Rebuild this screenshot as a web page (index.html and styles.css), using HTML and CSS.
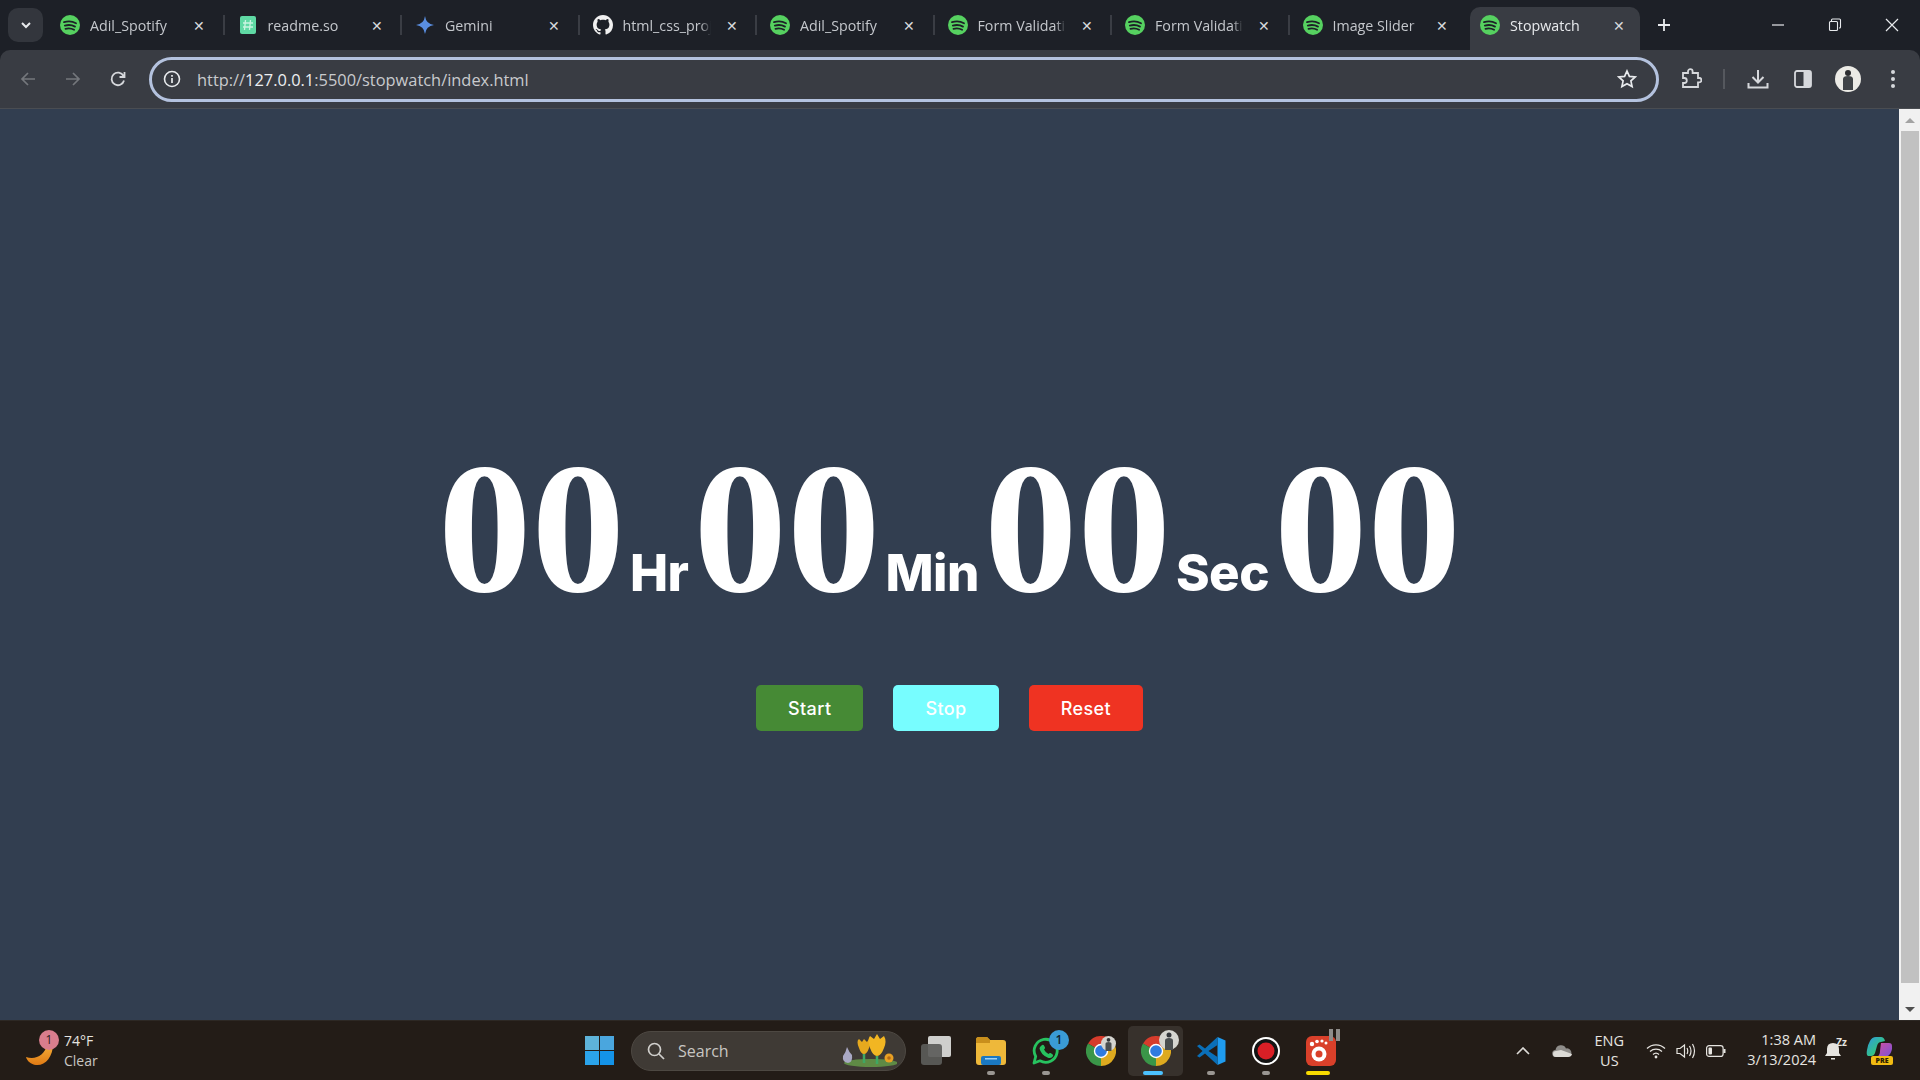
FILE: index.html
```html
<!DOCTYPE html>
<html lang="en">
<head>
  <meta charset="UTF-8">
  <title>Stopwatch</title>
  <link rel="stylesheet" href="styles.css">
</head>
<body>

  <svg class="defs" width="0" height="0">
    <symbol id="spotify" viewBox="0 0 20 20">
      <circle cx="10" cy="10" r="10" fill="#56d160"/>
      <path d="M4 7.2c4-1.2 8.500-.9 12 1M4.800 10.600c3.500-1 7.200-.7 10.200 1M5.500 13.800c3-.7 6-.5 8.600 1" fill="none" stroke="#1d2027" stroke-width="1.800" stroke-linecap="round"/>
    </symbol>
    <symbol id="chrome" viewBox="0 0 30 30">
      <path d="M15 15 2 7.500A15 15 0 0 1 28 7.500Z" fill="#d63c2c"/>
      <path d="M15 15 28 7.500A15 15 0 0 1 15 30Z" fill="#deaa1f"/>
      <path d="M15 15V30A15 15 0 0 1 2 7.500Z" fill="#3a9648"/>
      <circle cx="15" cy="15" r="7.200" fill="#fff"/>
      <circle cx="15" cy="15" r="5.800" fill="#2f7be0"/>
    </symbol>
    <symbol id="person" viewBox="0 0 20 20">
      <circle cx="10" cy="10" r="10" fill="#d5d5d0"/>
      <circle cx="10" cy="5" r="2.500" fill="#33363a"/>
      <path d="M6 20V10.500Q6 8 10 8T14 10.500V20Z" fill="#4a4e50"/>
    </symbol>
  </svg>

  <div class="browser">

    <div class="tabstrip">
      <button class="tab-menu">
        <svg width="12" height="12" viewBox="0 0 12 12"><path d="M2 4l4 4 4-4" fill="none" stroke="#e8eaed" stroke-width="2"/></svg>
      </button>

      <div class="tab">
        <svg class="favicon"><use href="#spotify"/></svg>
        <span class="tab-title">Adil_Spotify</span>
        <span class="tab-close">✕</span>
      </div>
      <div class="tab">
        <svg class="favicon" viewBox="0 0 20 20">
          <rect x="2" y="1" width="16" height="18" rx="2" fill="#5fd9a4"/>
          <path d="M7.500 5 6.500 15M12.500 5l-1 10M5 8h10M5 12h10" stroke="#c9f5e1" stroke-width="1.300"/>
        </svg>
        <span class="tab-title">readme.so</span>
        <span class="tab-close">✕</span>
      </div>
      <div class="tab">
        <svg class="favicon" viewBox="0 0 20 20"><path d="M10 1Q11 9 19 10 11 11 10 19 9 11 1 10 9 9 10 1Z" fill="#5a8ee0"/></svg>
        <span class="tab-title">Gemini</span>
        <span class="tab-close">✕</span>
      </div>
      <div class="tab">
        <svg class="favicon" viewBox="0 0 16 16"><path fill="#f0f0f0" d="M8 0C3.580 0 0 3.580 0 8c0 3.540 2.290 6.530 5.470 7.590.4.070.55-.17.55-.38 0-.19-.01-.82-.01-1.490-2.010.37-2.530-.49-2.690-.94-.09-.23-.48-.94-.82-1.130-.28-.15-.68-.52-.01-.53.63-.01 1.080.58 1.230.82.720 1.210 1.870.870 2.330.660.070-.520.280-.870.510-1.070-1.780-.2-3.640-.890-3.640-3.950 0-.870.310-1.590.820-2.150-.080-.2-.360-1.020.080-2.120 0 0 .670-.210 2.200.820.640-.180 1.320-.270 2-.270s1.360.090 2 .270c1.530-1.040 2.200-.820 2.200-.820.440 1.100.160 1.920.080 2.120.510.560.820 1.270.820 2.150 0 3.070-1.870 3.750-3.650 3.950.290.250.540.730.540 1.480 0 1.070-.010 1.930-.010 2.200 0 .210.150.460.550.380A8.010 8.010 0 0 0 16 8c0-4.420-3.580-8-8-8z"/></svg>
        <span class="tab-title">html_css_proj</span>
        <span class="tab-close">✕</span>
      </div>
      <div class="tab">
        <svg class="favicon"><use href="#spotify"/></svg>
        <span class="tab-title">Adil_Spotify</span>
        <span class="tab-close">✕</span>
      </div>
      <div class="tab">
        <svg class="favicon"><use href="#spotify"/></svg>
        <span class="tab-title">Form Validati</span>
        <span class="tab-close">✕</span>
      </div>
      <div class="tab">
        <svg class="favicon"><use href="#spotify"/></svg>
        <span class="tab-title">Form Validati</span>
        <span class="tab-close">✕</span>
      </div>
      <div class="tab before-active">
        <svg class="favicon"><use href="#spotify"/></svg>
        <span class="tab-title">Image Slider</span>
        <span class="tab-close">✕</span>
      </div>
      <div class="tab active">
        <svg class="favicon"><use href="#spotify"/></svg>
        <span class="tab-title">Stopwatch</span>
        <span class="tab-close">✕</span>
      </div>

      <svg class="new-tab" width="14" height="14" viewBox="0 0 14 14"><path d="M7 1v12M1 7h12" stroke="#e8eaed" stroke-width="1.800"/></svg>

      <div class="window-controls">
        <div class="window-btn"><svg width="14" height="14" viewBox="0 0 14 14"><path d="M1 7h12" stroke="#e8eaed" stroke-width="1.200"/></svg></div>
        <div class="window-btn"><svg width="14" height="14" viewBox="0 0 14 14"><path d="M3.500 3V2q0-1 1-1h7q1 0 1 1v7q0 1-1 1H11M1.500 4.500q0-1 1-1h6q1 0 1 1v7q0 1-1 1h-6q-1 0-1-1Z" fill="none" stroke="#e8eaed" stroke-width="1.100"/></svg></div>
        <div class="window-btn"><svg width="14" height="14" viewBox="0 0 14 14"><path d="M1 1l12 12M13 1 1 13" stroke="#e8eaed" stroke-width="1.200"/></svg></div>
      </div>
    </div>

    <div class="toolbar">
      <div class="nav-btn"><svg width="16" height="16" viewBox="0 0 16 16"><path d="M15 8H2M8 2 2 8l6 6" fill="none" stroke="#74777c" stroke-width="1.700"/></svg></div>
      <div class="nav-btn"><svg width="16" height="16" viewBox="0 0 16 16"><path d="M1 8h13M8 2l6 6-6 6" fill="none" stroke="#74777c" stroke-width="1.700"/></svg></div>
      <div class="nav-btn"><svg width="16" height="16" viewBox="0 0 16 16"><path d="M13.500 5A6.300 6.300 0 1 0 14 9.500M14.500 1v5h-5" fill="none" stroke="#d6d8dc" stroke-width="1.800"/></svg></div>

      <div class="omnibox">
        <svg width="18" height="18" viewBox="0 0 18 18"><circle cx="9" cy="9" r="7.500" fill="none" stroke="#e8eaed" stroke-width="1.600"/><path d="M9 8v5M9 5v1.800" stroke="#e8eaed" stroke-width="1.700"/></svg>
        <span class="url">http://<b>127.0.0.1</b>:5500/stopwatch/index.html</span>
        <svg class="star" width="20" height="20" viewBox="0 0 20 20"><path d="M10 2l2.400 5.400 5.800.6-4.300 3.900 1.200 5.700L10 14.700l-5.100 2.900 1.200-5.700L1.800 8l5.800-.6Z" fill="none" stroke="#e8eaed" stroke-width="1.700"/></svg>
      </div>

      <div class="toolbar-actions">
        <div class="nav-btn"><svg width="22" height="22" viewBox="0 0 22 22"><path d="M3 5h5V3.500a2.300 2.300 0 0 1 4.600 0V5H18v5h1.200a2.200 2.200 0 0 1 0 4.400H18V19H3v-4h1.300a2.500 2.500 0 0 0 0-5H3Z" fill="none" stroke="#d6d8dc" stroke-width="1.800"/></svg></div>
        <span class="toolbar-sep"></span>
        <div class="nav-btn"><svg width="22" height="22" viewBox="0 0 22 22"><path d="M11 2v12M5.500 9l5.500 5.500L16.500 9M1.500 15v4.500h19V15" fill="none" stroke="#d6d8dc" stroke-width="2"/></svg></div>
        <div class="nav-btn"><svg width="20" height="20" viewBox="0 0 20 20"><rect x="2" y="2" width="16" height="16" rx="2" fill="none" stroke="#d6d8dc" stroke-width="1.800"/><rect x="10.500" y="2" width="7.500" height="16" fill="#d6d8dc"/></svg></div>
        <div class="nav-btn"><svg width="26" height="26" viewBox="0 0 26 26"><circle cx="13" cy="13" r="13" fill="#ecebe6"/><circle cx="13" cy="7" r="3" fill="#2c2d30"/><path d="M8 24V13q0-3 5-3t5 3v11Z" fill="#404347"/></svg></div>
        <div class="nav-btn"><svg width="6" height="20" viewBox="0 0 6 20"><circle cx="3" cy="3" r="2" fill="#d6d8dc"/><circle cx="3" cy="10" r="2" fill="#d6d8dc"/><circle cx="3" cy="17" r="2" fill="#d6d8dc"/></svg></div>
      </div>
    </div>

    <div class="viewport">
      <main class="page">
        <div class="clock">
          <span class="digits">00</span>
          <span class="unit">Hr</span>
          <span class="digits">00</span>
          <span class="unit">Min</span>
          <span class="digits">00</span>
          <span class="unit">Sec</span>
          <span class="digits">00</span>
        </div>
        <div class="buttons">
          <button class="btn btn-start">Start</button>
          <button class="btn btn-stop">Stop</button>
          <button class="btn btn-reset">Reset</button>
        </div>
      </main>

      <div class="scrollbar">
        <div class="arrow-box"><span class="arrow-up"></span></div>
        <div class="thumb"></div>
        <div class="arrow-box"><span class="arrow-down"></span></div>
      </div>
    </div>

    <div class="taskbar">
      <div class="weather">
        <svg width="28" height="22" viewBox="0 0 28 22">
          <defs><linearGradient id="moon" x1="0" y1="0" x2="0" y2="1"><stop offset="0" stop-color="#f5b13a"/><stop offset="1" stop-color="#e07a14"/></linearGradient></defs>
          <path d="M27 0C27 13 19 22 10 21 5 20.500 1 17 0 13 9 16 19 12 21 0Z" fill="url(#moon)"/>
        </svg>
        <span class="weather-badge">1</span>
        <div class="weather-text">
          <span>74°F</span>
          <span>Clear</span>
        </div>
      </div>

      <div class="task-apps">
        <div class="task-item">
          <svg width="29" height="29" viewBox="0 0 29 29">
            <rect width="14" height="14" fill="#5eb3d9"/><rect x="15" width="14" height="14" fill="#4aa6de"/>
            <rect y="15" width="14" height="14" fill="#2ba3ea"/><rect x="15" y="15" width="14" height="14" fill="#1493e8"/>
          </svg>
        </div>

        <div class="search">
          <svg width="18" height="18" viewBox="0 0 18 18"><circle cx="7.500" cy="7.500" r="6" fill="none" stroke="#d0cfcc" stroke-width="1.700"/><path d="M12 12l5 5" stroke="#d0cfcc" stroke-width="1.700"/></svg>
          <span class="search-label">Search</span>
          <svg class="search-art" width="56" height="34" viewBox="0 0 56 34">
            <ellipse cx="30" cy="29" rx="27" ry="4" fill="#5f8a45"/>
            <path d="M7 29q-6-1-5-7 3-4 4-9 2 5 5 8 1 7-4 8Z" fill="#a9a8c4"/>
            <path d="M18 14q-3-7 0-9l3 3 2-3 3 3 2-3q3 3 0 9-2 6-5 6t-5-6Z" fill="#e6a91e"/>
            <path d="M29 14q-3-9 0-12l4 3 3-5 3 5 4-3q3 5 0 12-3 8-7 8t-7-8Z" fill="#f2b622"/>
            <path d="M23 20v9M36 22v8" stroke="#3fa763" stroke-width="2.500"/>
            <circle cx="48" cy="24" r="4.500" fill="#e8a024"/><circle cx="48" cy="24" r="1.800" fill="#b86a12"/>
          </svg>
        </div>

        <div class="task-item">
          <svg width="30" height="29" viewBox="0 0 30 29">
            <rect x="7" width="23" height="21" rx="2" fill="#cfcfcd"/>
            <rect y="8" width="21" height="21" rx="3" fill="#5c5c5a" fill-opacity=".92"/>
          </svg>
        </div>
        <div class="task-item has-dot">
          <svg width="30" height="28" viewBox="0 0 30 28">
            <path d="M0 3q0-3 3-3h8l3 3h13q3 0 3 3v19q0 3-3 3H3q-3 0-3-3Z" fill="#eeb83a"/>
            <path d="M0 3q0-3 3-3h8l3 3v3H0Z" fill="#c98f1c"/>
            <rect x="5" y="19" width="20" height="9" rx="2" fill="#1a78c2"/>
            <rect x="9" y="21" width="12" height="1.500" fill="#9fd2f5"/>
          </svg>
        </div>
        <div class="task-item has-dot">
          <svg width="27" height="28" viewBox="0 0 27 28">
            <path d="M2 26l1.700-6.500A11.500 11.500 0 1 1 8 23.800Z" fill="none" stroke="#27c25f" stroke-width="2.800" stroke-linejoin="round"/>
            <path d="M9.500 8.500q1.500-1.500 2.500 0l1 2q.3 1-1 2 1.500 3 4.500 4.500 1-1.300 2-1l2 1.200q1.300 1 0 2.500-2 2-5 .7-6.500-2.700-8-9 0-1.500 2-2.900Z" fill="#27c25f"/>
          </svg>
          <span class="app-badge">1</span>
        </div>
        <div class="task-item">
          <svg width="30" height="30"><use href="#chrome"/></svg>
          <svg class="chrome-user"><use href="#person"/></svg>
        </div>
        <div class="task-item current has-dot">
          <svg width="30" height="30"><use href="#chrome"/></svg>
          <svg class="chrome-user big"><use href="#person"/></svg>
        </div>
        <div class="task-item has-dot">
          <svg width="30" height="30" viewBox="0 0 30 30">
            <path d="M21.500 1 29.500 4.500v21L21.500 29Z" fill="#1f9cf0"/>
            <path d="M21.500 1 9 12.500 3.500 8.500 1 10l5.500 5L1 20l2.500 1.500L9 17.500 21.500 29v-8l-9-6 9-6Z" fill="#0a6fb8"/>
          </svg>
        </div>
        <div class="task-item has-dot">
          <svg width="28" height="28" viewBox="0 0 28 28">
            <circle cx="14" cy="14" r="14" fill="#fff"/><circle cx="14" cy="14" r="12" fill="#141414"/><circle cx="14" cy="14" r="8.500" fill="#d91f26"/>
          </svg>
        </div>
        <div class="task-item has-bar">
          <svg width="30" height="30" viewBox="0 0 30 30">
            <rect width="30" height="30" rx="6" fill="#d9402a"/>
            <circle cx="13" cy="18" r="7.500" fill="#fff"/><circle cx="13" cy="18" r="3.500" fill="#d9402a"/>
            <circle cx="6" cy="8" r="2.200" fill="#fff"/><circle cx="11" cy="5.500" r="1.800" fill="#fff"/><circle cx="16" cy="5" r="1.600" fill="#fff"/><circle cx="20" cy="7" r="1.500" fill="#fff"/>
          </svg>
          <span class="pause-bars"></span>
        </div>
      </div>

      <div class="tray">
        <svg class="tray-chevron" width="14" height="8" viewBox="0 0 14 8"><path d="M1 7l6-6 6 6" fill="none" stroke="#dedcd8" stroke-width="1.600"/></svg>
        <svg class="tray-cloud" width="20" height="13" viewBox="0 0 20 13"><path d="M4 13a3.500 3.500 0 0 1-.5-7A5.500 5.500 0 0 1 14 4.500 4.200 4.200 0 0 1 16 13Z" fill="#8f8d8a"/><path d="M4 13a3 3 0 0 1 0-6l5-1 11 4q-.5 3-4 3Z" fill="#dcdad6"/></svg>
        <div class="tray-lang">
          <span>ENG</span>
          <span>US</span>
        </div>
        <svg width="20" height="16" viewBox="0 0 20 16"><path d="M1 5.500a13 13 0 0 1 18 0M4 8.500a9 9 0 0 1 12 0M7 11.500a4.500 4.500 0 0 1 6 0" fill="none" stroke="#e6e4e0" stroke-width="1.300"/><circle cx="10" cy="14" r="1.400" fill="#e6e4e0"/></svg>
        <svg class="tray-sound" width="20" height="16" viewBox="0 0 20 16"><path d="M1 5.500h3L8.500 2v12L4 10.500H1ZM11 5q1.500 3 0 6M13.500 3q3 5 0 10M16.500 1q4 7 0 14" fill="none" stroke="#e6e4e0" stroke-width="1.200"/></svg>
        <svg class="tray-battery" width="20" height="12" viewBox="0 0 20 12"><rect x=".6" y=".6" width="16.500" height="10.800" rx="2.500" fill="none" stroke="#e6e4e0" stroke-width="1.200"/><rect x="2.500" y="2.500" width="3.500" height="7" rx="1" fill="#e6e4e0"/><path d="M18.500 4v4" stroke="#e6e4e0" stroke-width="2"/></svg>
        <div class="tray-clock">
          <span>1:38 AM</span>
          <span>3/13/2024</span>
        </div>
        <div class="tray-bell">
          <svg width="18" height="20" viewBox="0 0 18 20"><path d="M8 2q6 0 6 6v4l2 3H0l2-3V8q0-6 6-6Z" fill="#e6e4e0"/><path d="M6 17h4v1.500H6Z" fill="#e6e4e0"/></svg>
          <span class="bell-z">Zz</span>
        </div>
        <div class="copilot">
          <svg width="28" height="22" viewBox="0 0 28 22">
            <defs>
              <linearGradient id="cp-a" x1="0" y1="0" x2="1" y2="1"><stop offset="0" stop-color="#2f9ae0"/><stop offset=".6" stop-color="#33c18a"/><stop offset="1" stop-color="#d7c83a"/></linearGradient>
              <linearGradient id="cp-b" x1="0" y1="0" x2="1" y2="1"><stop offset="0" stop-color="#d050a0"/><stop offset="1" stop-color="#7a52d8"/></linearGradient>
            </defs>
            <path d="M2 14q1-6 3-9 2-4 6-4h5q3 0 4 4l-4 1q-3 0-4 4l-2 7q-1 3-4 3H3q-2-1-1-6Z" fill="url(#cp-a)"/>
            <path d="M16 7h8q3 0 3 3v3q-1 5-4 7-1 1-4 1h-7q3-2 3-6Z" fill="url(#cp-b)"/>
          </svg>
          <span class="pre-tag">PRE</span>
        </div>
      </div>
    </div>

  </div>

</body>
</html>
```

FILE: styles.css
```css
* {
  box-sizing: border-box;
}

body {
  margin: 0;
  font-family: "Open Sans", sans-serif;
  overflow: hidden;
}

.defs {
  position: absolute;
}

.browser {
  display: flex;
  flex-direction: column;
  height: 100vh;
  background-color: #1d2027;
}

/* tab strip */
.tabstrip {
  display: flex;
  align-items: flex-end;
  height: 50px;
  padding-left: 8px;
  flex-shrink: 0;
}

.tab-menu {
  display: flex;
  align-items: center;
  justify-content: center;
  width: 35px;
  height: 34px;
  margin: 0 4px 8px 0;
  padding: 0;
  border: 0;
  border-radius: 10px;
  background-color: #33363d;
}

.tab {
  position: relative;
  display: flex;
  align-items: center;
  width: 177.5px;
  height: 43px;
  padding: 0 0 7px 13px;
  color: #c4c7cc;
  font-size: 14.25px;
}

.tab::after {
  content: "";
  position: absolute;
  right: 0;
  top: 8px;
  width: 2px;
  height: 20px;
  background-color: #3a3d44;
}

.favicon {
  width: 20px;
  height: 20px;
  flex-shrink: 0;
  margin-right: 10px;
}

.tab-title {
  width: 88px;
  flex-shrink: 0;
  white-space: nowrap;
  -webkit-mask-image: linear-gradient(to right, #000 88%, transparent);
  mask-image: linear-gradient(to right, #000 88%, transparent);
}

.tab-close {
  margin-left: 15px;
  font-size: 14px;
  color: #d6d8dc;
}

.before-active::after,
.active::after {
  display: none;
}

.tab.active {
  width: 170px;
  margin-left: 3px;
  padding-left: 10px;
  border-radius: 10px 10px 0 0;
  background-color: #393c43;
  color: #e8eaed;
}

.new-tab {
  margin: 0 0 18px 17px;
}

.window-controls {
  display: flex;
  margin-left: auto;
  align-self: stretch;
}

.window-btn {
  display: flex;
  align-items: center;
  justify-content: center;
  width: 57px;
}

/* toolbar */
.toolbar {
  display: flex;
  align-items: center;
  height: 59px;
  padding-left: 5px;
  flex-shrink: 0;
  border-radius: 10px 10px 0 0;
  background-color: #393c43;
  border-bottom: 1px solid #4a4d52;
}

.nav-btn {
  display: flex;
  align-items: center;
  justify-content: center;
  width: 45px;
  height: 40px;
}

.omnibox {
  display: flex;
  align-items: center;
  flex: 1;
  height: 45px;
  margin-left: 9px;
  padding: 0 19px 0 11px;
  border: 3px solid #b4c2de;
  border-radius: 23px;
}

.url {
  flex: 1;
  margin-left: 16px;
  padding-top: 1px;
  font-size: 16.4px;
  color: #c8cacd;
}

.url b {
  font-weight: normal;
  color: #eceef0;
}

.toolbar-actions {
  display: flex;
  align-items: center;
  width: 261px;
  padding-left: 9px;
}

.toolbar-sep {
  width: 2px;
  height: 20px;
  margin: 0 10px;
  background-color: #55585e;
}

/* page */
.viewport {
  display: flex;
  flex: 1;
  min-height: 0;
}

.page {
  display: flex;
  flex: 1;
  flex-direction: column;
  align-items: center;
  justify-content: center;
  padding-top: 27px;
  background-color: #323e50;
  color: white;
}

.clock {
  display: flex;
  align-items: baseline;
  margin-bottom: 55px;
}

.digits {
  font-family: "Liberation Serif", serif;
  font-size: 187px;
  font-weight: bold;
  line-height: 1.1;
}

.unit {
  margin: 0 5px;
  font-family: Inter, sans-serif;
  font-size: 51px;
  font-weight: 800;
  letter-spacing: -.5px;
}

.buttons {
  display: flex;
  gap: 30px;
}

.btn {
  height: 46px;
  padding: 0 32px;
  border: 0;
  border-radius: 5px;
  color: white;
  font-family: Inter, sans-serif;
  font-size: 18px;
  font-weight: 500;
  letter-spacing: .4px;
}

.btn-start {
  background-color: #468a35;
}

.btn-stop {
  background-color: #77fdff;
}

.btn-reset {
  background-color: #ef3322;
}

.scrollbar {
  display: flex;
  flex-direction: column;
  justify-content: space-between;
  width: 21px;
  background-color: #f1f1f1;
}

.arrow-box {
  display: flex;
  align-items: center;
  justify-content: center;
  height: 22px;
}

.arrow-up {
  border: 5px solid transparent;
  border-top: 0;
  border-bottom: 5px solid #a3a3a3;
}

.arrow-down {
  border: 5px solid transparent;
  border-bottom: 0;
  border-top: 5px solid #505050;
}

.thumb {
  flex: 1;
  margin: 0 1px 15px 2px;
  background-color: #c1c1c1;
}

/* taskbar */
.taskbar {
  display: grid;
  grid-template-columns: 572px auto 1fr;
  align-items: center;
  height: 60px;
  flex-shrink: 0;
  background-color: #231c17;
  border-top: 1px solid #2d2824;
  color: #e6e4e0;
  font-size: 14.5px;
}

.weather {
  position: relative;
  display: flex;
  align-items: flex-end;
  padding-left: 26px;
}

.weather > svg {
  margin-bottom: 5px;
}

.weather-badge {
  position: absolute;
  left: 39px;
  top: -1px;
  width: 20px;
  height: 20px;
  border-radius: 50%;
  background-color: #d97d8d;
  color: #2a2020;
  font-size: 12px;
  line-height: 20px;
  text-align: center;
}

.weather-text {
  display: flex;
  flex-direction: column;
  margin-left: 10px;
  font-size: 14px;
  line-height: 20px;
}

.weather-text span:last-child {
  color: #c8c6c2;
}

.task-apps {
  display: flex;
  align-items: center;
}

.task-item {
  position: relative;
  display: flex;
  align-items: center;
  justify-content: center;
  width: 55px;
  height: 50px;
}

.search {
  display: flex;
  align-items: center;
  width: 275px;
  height: 40px;
  margin: 0 2px 0 4px;
  padding: 0 8px 0 15px;
  border: 1px solid #4d4842;
  border-radius: 20px;
  background-color: #3f3a35;
}

.search-label {
  flex: 1;
  margin-left: 13px;
  font-size: 16px;
  color: #c8c6c2;
}

.has-dot::after {
  content: "";
  position: absolute;
  bottom: 1px;
  left: 23.5px;
  width: 8px;
  height: 4px;
  border-radius: 2px;
  background-color: #9a9692;
}

.current {
  border-radius: 5px;
  background-color: #37312c;
}

.current::after {
  left: 15px;
  width: 20px;
  background-color: #4cc2ff;
}

.has-bar::after {
  content: "";
  position: absolute;
  bottom: 1px;
  left: 12.500px;
  width: 24px;
  height: 4px;
  border-radius: 2px;
  background-color: #f9db00;
}

.app-badge {
  position: absolute;
  right: 4px;
  top: 4px;
  width: 20px;
  height: 20px;
  border-radius: 50%;
  background-color: #3a9bd5;
  color: #10202c;
  font-size: 12px;
  font-weight: 600;
  line-height: 20px;
  text-align: center;
}

.chrome-user {
  position: absolute;
  right: 12px;
  top: 10px;
  width: 15px;
  height: 15px;
}

.chrome-user.big {
  right: 4px;
  top: 4px;
  width: 20px;
  height: 20px;
}

.pause-bars {
  position: absolute;
  right: 8px;
  top: 3px;
  width: 11px;
  height: 12px;
  border-left: 4px solid #8e8c8a;
  border-right: 4px solid #8e8c8a;
}

.tray {
  display: flex;
  align-items: center;
  justify-content: flex-end;
  padding-right: 27px;
}

.tray-chevron {
  margin-right: 22px;
}

.tray-cloud {
  margin-right: 23px;
}

.tray-lang {
  display: flex;
  flex-direction: column;
  align-items: center;
  width: 28px;
  margin-right: 23px;
  line-height: 20px;
}

.tray-sound,
.tray-battery {
  margin-left: 10px;
}

.tray-clock {
  display: flex;
  flex-direction: column;
  align-items: flex-end;
  margin: 0 0 1px 21px;
  line-height: 20px;
}

.tray-bell {
  position: relative;
  display: flex;
  margin-left: 9px;
}

.bell-z {
  position: absolute;
  right: -4px;
  top: -6px;
  font-size: 10px;
  font-weight: 700;
}

.copilot {
  position: relative;
  display: flex;
  margin-left: 22px;
  padding-bottom: 7px;
}

.pre-tag {
  position: absolute;
  left: 6px;
  bottom: 0;
  width: 22px;
  height: 9px;
  border-radius: 2px;
  background-color: #f2bb12;
  color: #2a2000;
  font-size: 7px;
  font-weight: 800;
  line-height: 9px;
  text-align: center;
}
```
